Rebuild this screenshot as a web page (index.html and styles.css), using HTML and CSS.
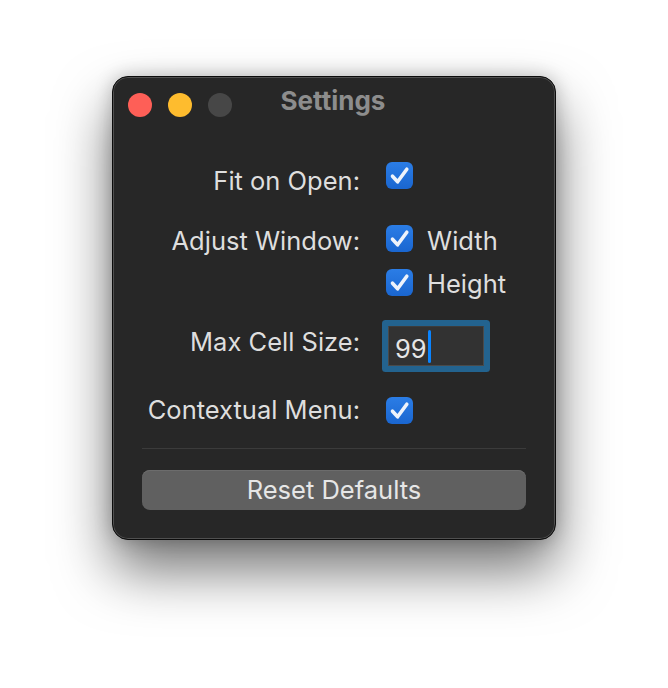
FILE: index.html
```html
<!DOCTYPE html>
<html>
<head>
<meta charset="utf-8">
<link rel="stylesheet" href="styles.css">
</head>
<body>
<div class="window">
  <div class="titlebar">
    <div class="lights">
      <span class="light red"></span>
      <span class="light yellow"></span>
      <span class="light gray"></span>
    </div>
    <div class="title">Settings</div>
  </div>
  <div class="form">
    <div class="row row-fit">
      <div class="label">Fit on Open:</div>
      <div class="control"><span class="check"><svg viewBox="0 0 27 27"><path d="M6.5 14.2 L11.6 19.8 L20.8 7.2"/></svg></span></div>
    </div>
    <div class="row row-width">
      <div class="label">Adjust Window:</div>
      <div class="control"><span class="check"><svg viewBox="0 0 27 27"><path d="M6.5 14.2 L11.6 19.8 L20.8 7.2"/></svg></span><span class="opt">Width</span></div>
    </div>
    <div class="row row-height">
      <div class="label"></div>
      <div class="control"><span class="check"><svg viewBox="0 0 27 27"><path d="M6.5 14.2 L11.6 19.8 L20.8 7.2"/></svg></span><span class="opt">Height</span></div>
    </div>
    <div class="row row-max">
      <div class="label">Max Cell Size:</div>
      <div class="control"><div class="field"><span class="value">99</span><span class="caret"></span></div></div>
    </div>
    <div class="row row-menu">
      <div class="label">Contextual Menu:</div>
      <div class="control"><span class="check"><svg viewBox="0 0 27 27"><path d="M6.5 14.2 L11.6 19.8 L20.8 7.2"/></svg></span></div>
    </div>
  </div>
  <div class="sep"></div>
  <div class="button">Reset Defaults</div>
</div>
</body>
</html>
```
FILE: styles.css
```css
html, body {
  margin: 0;
  background: #ffffff;
}
body {
  padding: 76px 0 0 112px;
  min-height: 688px;
  box-sizing: border-box;
  font-family: "Inter", "Liberation Sans", sans-serif;
}
.window {
  width: 442px;
  height: 462px;
  background: #272727;
  border: 1px solid #0c0c0c;
  border-radius: 16px;
  box-shadow: inset 0 0 0 1px #505050, 0 30px 56px rgba(0,0,0,0.55), 0 0 18px rgba(0,0,0,0.22);
  display: flex;
  flex-direction: column;
}
.titlebar {
  height: 55px;
  display: flex;
  align-items: center;
  position: relative;
}
.lights {
  display: flex;
  gap: 16px;
  padding-left: 15px;
  padding-top: 1px;
}
.light {
  width: 24px;
  height: 24px;
  border-radius: 50%;
  display: block;
}
.red { background: #fe5f57; }
.yellow { background: #febc2e; }
.gray { background: #474747; }
.title {
  position: absolute;
  left: 0;
  right: 0;
  top: 8px;
  text-align: center;
  font-size: 26px;
  font-weight: 700;
  color: #8d8d8d;
  padding-right: 2px;
}
.form {
  display: flex;
  flex-direction: column;
  padding-top: 30px;
}
.row {
  display: grid;
  grid-template-columns: 247px auto;
  column-gap: 26px;
  align-items: start;
  height: 27px;
}
.row-width { margin-top: 36px; }
.row-height { margin-top: 17px; }
.row-max { margin-top: 24px; height: 52px; }
.row-menu { margin-top: 25px; }
.label {
  text-align: right;
  font-size: 25.5px;
  line-height: 30px;
  color: #dedede;
  white-space: nowrap;
}
.row-fit .label { margin-top: 4px; }
.row-width .label { margin-top: 1px; }
.row-max .label { margin-top: 7px; }
.row-menu .label { margin-top: -2px; }
.control {
  display: flex;
  align-items: flex-start;
  gap: 14px;
}
.opt {
  font-size: 25.5px;
  line-height: 30px;
  color: #dedede;
}
.row-width .opt { margin-top: 1px; }
.check {
  width: 27px;
  height: 27px;
  border-radius: 6px;
  background: linear-gradient(#2b7de6, #1a66d0);
  display: block;
}
.check svg {
  width: 27px;
  height: 27px;
  display: block;
}
.check path {
  fill: none;
  stroke: #eef3fb;
  stroke-width: 3.6;
  stroke-linecap: round;
  stroke-linejoin: round;
}
.field {
  width: 88px;
  height: 38px;
  margin: 6px 0 0 2px;
  background: #323232;
  border: 1px solid #4a4a4a;
  border-top-color: #3c3c3c;
  box-shadow: 0 0 0 6px #23638f;
  border-radius: 1px;
  display: flex;
  align-items: flex-start;
  padding-left: 6px;
  box-sizing: content-box;
}
.value {
  font-size: 25.5px;
  line-height: 30px;
  margin-top: 7px;
  color: #e6e6e6;
}
.caret {
  width: 3.5px;
  height: 33px;
  margin-top: 3px;
  background: #0a84ff;
  margin-left: 1px;
  border-radius: 2px;
}
.sep {
  height: 1px;
  background: #3b3b3b;
  margin: 24px 29px 0 29px;
}
.button {
  margin: 21px 29px 0 29px;
  height: 40px;
  border-radius: 8px;
  background: #606060;
  box-shadow: inset 0 1px 0 #6c6c6c;
  color: #e6e6e6;
  font-size: 25.5px;
  display: flex;
  align-items: center;
  justify-content: center;
  padding-bottom: 2px;
  box-sizing: border-box;
}
```
